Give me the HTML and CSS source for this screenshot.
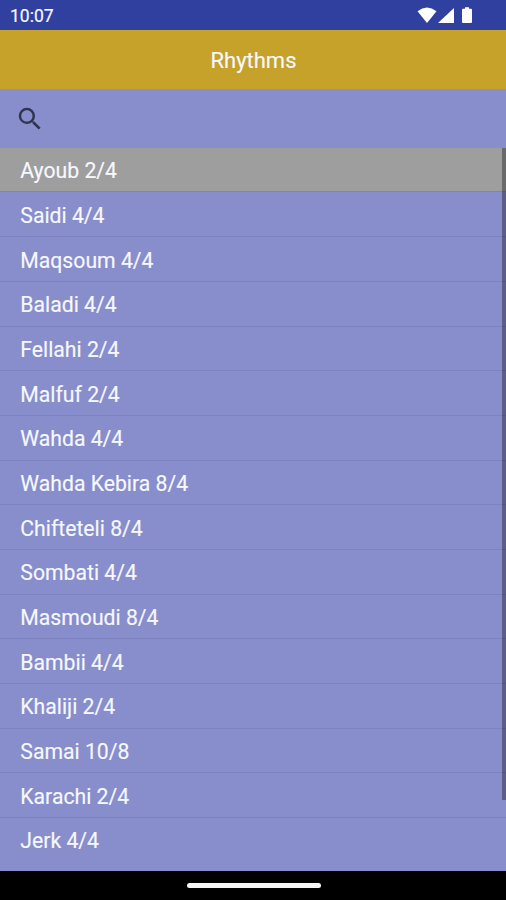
FILE: index.html
```html
<!DOCTYPE html>
<html lang="en">
<head>
<meta charset="utf-8">
<title>Rhythms</title>
<link rel="stylesheet" href="styles.css">
</head>
<body>
<div class="screen">
  <div class="status">
    <span>10:07</span>
    <svg class="status-icons" width="58" height="18" viewBox="0 0 58 18" fill="#fff">
      <path d="M.5 4.2Q10 -3.2 19.5 4.2L10 16Z"/>
      <path d="M37 1V16H21Z"/>
      <path d="M52 0.3V1.8H54Q55 1.800 55 2.800V15Q55 16 54 16H46Q45 16 45 15V2.800Q45 1.800 46 1.800H48V.3Z"/>
    </svg>
  </div>
  <header class="title">Rhythms</header>
  <div class="search">
    <svg width="30" height="30" viewBox="0 0 24 24" fill="#30344f"><path d="M15.5 14h-.79l-.28-.27A6.471 6.471 0 0 0 16 9.500 6.500 6.500 0 1 0 9.500 16c1.610 0 3.090-.59 4.230-1.570l.27.28v.79l5 4.990L20.490 19l-4.990-5zm-6 0C7.010 14 5 11.990 5 9.500S7.010 5 9.500 5 14 7.010 14 9.500 11.990 14 9.500 14z"/></svg>
  </div>
  <main class="content">
    <ul class="list">
      <li class="selected">Ayoub 2/4</li>
      <li>Saidi 4/4</li>
      <li>Maqsoum 4/4</li>
      <li>Baladi 4/4</li>
      <li>Fellahi 2/4</li>
      <li>Malfuf 2/4</li>
      <li>Wahda 4/4</li>
      <li>Wahda Kebira 8/4</li>
      <li>Chifteteli 8/4</li>
      <li>Sombati 4/4</li>
      <li>Masmoudi 8/4</li>
      <li>Bambii 4/4</li>
      <li>Khaliji 2/4</li>
      <li>Samai 10/8</li>
      <li>Karachi 2/4</li>
      <li>Jerk 4/4</li>
    </ul>
    <div class="scrollbar"></div>
  </main>
  <div class="nav"><div class="handle"></div></div>
</div>
</body>
</html>
```
FILE: styles.css
```css
* { box-sizing: border-box; }
body {
  margin: 0;
  font-family: Roboto, sans-serif;
  color: #f7f8ff;
}
.screen {
  width: 506px;
  height: 900px;
  display: flex;
  flex-direction: column;
  overflow: hidden;
  background: #888ecb;
}
.status {
  height: 30px;
  flex: none;
  display: flex;
  justify-content: space-between;
  align-items: center;
  padding: 2px 31px 0 10px;
  background: #30409f;
  font-size: 17.5px;
  -webkit-text-stroke: .2px;
}
.title {
  height: 59px;
  flex: none;
  display: flex;
  align-items: center;
  justify-content: center;
  padding: 2px 0 0 1px;
  background: #c6a22a;
  font-size: 22px;
  -webkit-text-stroke: .15px;
}
.search {
  height: 59px;
  flex: none;
  display: flex;
  align-items: center;
  padding-left: 15px;
}
.content {
  flex: 1;
  min-height: 0;
  position: relative;
}
.list {
  list-style: none;
  margin: 0;
  padding: 0;
}
.list li {
  height: 44.66px;
  padding: 1.4px 0 0 20.3px;
  border-bottom: 1px solid #7c82bd;
  font-size: 21.2px;
  line-height: 43px;
  -webkit-text-stroke: .15px;
}
.list li:last-child { border-bottom: 0; }
.list .selected {
  height: 44.3px;
  margin-bottom: .36px;
  padding-top: 1px;
  background: #9e9e9e;
  border-bottom-color: #8085ae;
}
.scrollbar {
  position: absolute;
  top: 0;
  right: 0;
  width: 4px;
  height: 652px;
  background: rgba(0, 0, 0, .33);
}
.nav {
  height: 29px;
  flex: none;
  display: flex;
  justify-content: center;
  align-items: center;
  background: #000;
}
.handle {
  width: 134px;
  height: 5px;
  margin-left: 1px;
  border-radius: 3px;
  background: #f5f5f5;
}
```
